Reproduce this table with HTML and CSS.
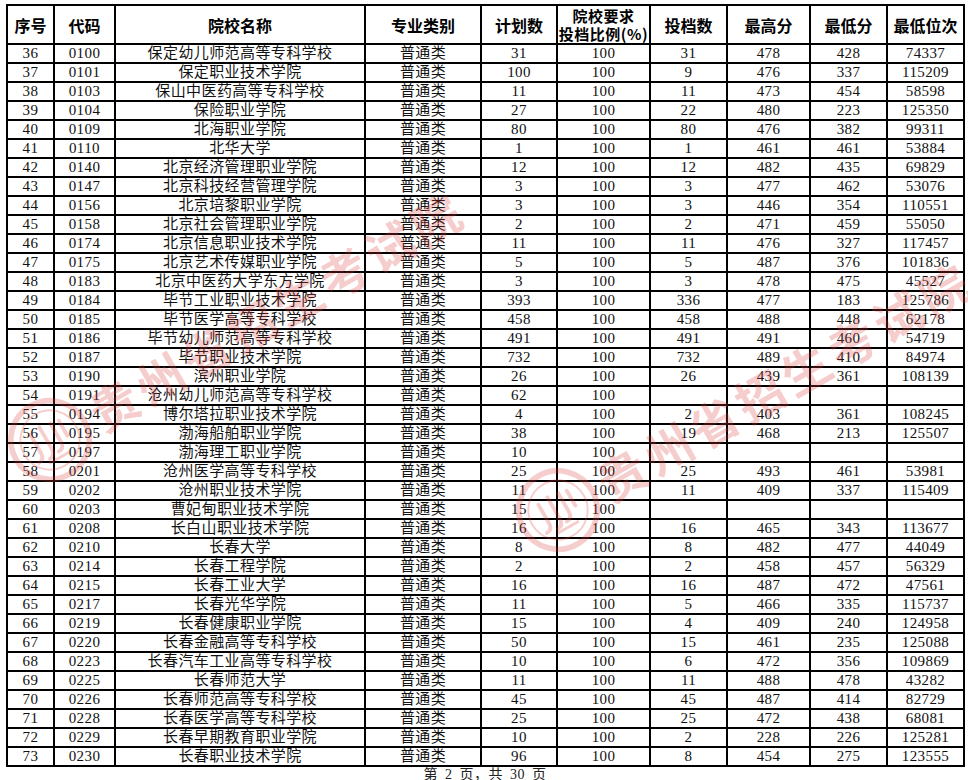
FILE: index.html
```html
<!DOCTYPE html>
<html lang="zh-CN">
<head>
<meta charset="utf-8">
<title>投档情况</title>
<link rel="stylesheet" href="styles.css">
</head>
<body>
<div class="page">
<table class="grid">
<colgroup>
<col class="c1"><col class="c2"><col class="c3"><col class="c4"><col class="c5"><col class="c6"><col class="c7"><col class="c8"><col class="c9"><col class="c10">
</colgroup>
<thead>
<tr><th>序号</th><th>代码</th><th>院校名称</th><th>专业类别</th><th>计划数</th><th class="two">院校要求<br>投档比例(%)</th><th>投档数</th><th>最高分</th><th>最低分</th><th>最低位次</th></tr>
</thead>
<tbody>
<tr><td>36</td><td>0100</td><td>保定幼儿师范高等专科学校</td><td>普通类</td><td>31</td><td>100</td><td>31</td><td>478</td><td>428</td><td>74337</td></tr>
<tr><td>37</td><td>0101</td><td>保定职业技术学院</td><td>普通类</td><td>100</td><td>100</td><td>9</td><td>476</td><td>337</td><td>115209</td></tr>
<tr><td>38</td><td>0103</td><td>保山中医药高等专科学校</td><td>普通类</td><td>11</td><td>100</td><td>11</td><td>473</td><td>454</td><td>58598</td></tr>
<tr><td>39</td><td>0104</td><td>保险职业学院</td><td>普通类</td><td>27</td><td>100</td><td>22</td><td>480</td><td>223</td><td>125350</td></tr>
<tr><td>40</td><td>0109</td><td>北海职业学院</td><td>普通类</td><td>80</td><td>100</td><td>80</td><td>476</td><td>382</td><td>99311</td></tr>
<tr><td>41</td><td>0110</td><td>北华大学</td><td>普通类</td><td>1</td><td>100</td><td>1</td><td>461</td><td>461</td><td>53884</td></tr>
<tr><td>42</td><td>0140</td><td>北京经济管理职业学院</td><td>普通类</td><td>12</td><td>100</td><td>12</td><td>482</td><td>435</td><td>69829</td></tr>
<tr><td>43</td><td>0147</td><td>北京科技经营管理学院</td><td>普通类</td><td>3</td><td>100</td><td>3</td><td>477</td><td>462</td><td>53076</td></tr>
<tr><td>44</td><td>0156</td><td>北京培黎职业学院</td><td>普通类</td><td>3</td><td>100</td><td>3</td><td>446</td><td>354</td><td>110551</td></tr>
<tr><td>45</td><td>0158</td><td>北京社会管理职业学院</td><td>普通类</td><td>2</td><td>100</td><td>2</td><td>471</td><td>459</td><td>55050</td></tr>
<tr><td>46</td><td>0174</td><td>北京信息职业技术学院</td><td>普通类</td><td>11</td><td>100</td><td>11</td><td>476</td><td>327</td><td>117457</td></tr>
<tr><td>47</td><td>0175</td><td>北京艺术传媒职业学院</td><td>普通类</td><td>5</td><td>100</td><td>5</td><td>487</td><td>376</td><td>101836</td></tr>
<tr><td>48</td><td>0183</td><td>北京中医药大学东方学院</td><td>普通类</td><td>3</td><td>100</td><td>3</td><td>478</td><td>475</td><td>45527</td></tr>
<tr><td>49</td><td>0184</td><td>毕节工业职业技术学院</td><td>普通类</td><td>393</td><td>100</td><td>336</td><td>477</td><td>183</td><td>125786</td></tr>
<tr><td>50</td><td>0185</td><td>毕节医学高等专科学校</td><td>普通类</td><td>458</td><td>100</td><td>458</td><td>488</td><td>448</td><td>62178</td></tr>
<tr><td>51</td><td>0186</td><td>毕节幼儿师范高等专科学校</td><td>普通类</td><td>491</td><td>100</td><td>491</td><td>491</td><td>460</td><td>54719</td></tr>
<tr><td>52</td><td>0187</td><td>毕节职业技术学院</td><td>普通类</td><td>732</td><td>100</td><td>732</td><td>489</td><td>410</td><td>84974</td></tr>
<tr><td>53</td><td>0190</td><td>滨州职业学院</td><td>普通类</td><td>26</td><td>100</td><td>26</td><td>439</td><td>361</td><td>108139</td></tr>
<tr><td>54</td><td>0191</td><td>沧州幼儿师范高等专科学校</td><td>普通类</td><td>62</td><td>100</td><td></td><td></td><td></td><td></td></tr>
<tr><td>55</td><td>0194</td><td>博尔塔拉职业技术学院</td><td>普通类</td><td>4</td><td>100</td><td>2</td><td>403</td><td>361</td><td>108245</td></tr>
<tr><td>56</td><td>0195</td><td>渤海船舶职业学院</td><td>普通类</td><td>38</td><td>100</td><td>19</td><td>468</td><td>213</td><td>125507</td></tr>
<tr><td>57</td><td>0197</td><td>渤海理工职业学院</td><td>普通类</td><td>10</td><td>100</td><td></td><td></td><td></td><td></td></tr>
<tr><td>58</td><td>0201</td><td>沧州医学高等专科学校</td><td>普通类</td><td>25</td><td>100</td><td>25</td><td>493</td><td>461</td><td>53981</td></tr>
<tr><td>59</td><td>0202</td><td>沧州职业技术学院</td><td>普通类</td><td>11</td><td>100</td><td>11</td><td>409</td><td>337</td><td>115409</td></tr>
<tr><td>60</td><td>0203</td><td>曹妃甸职业技术学院</td><td>普通类</td><td>15</td><td>100</td><td></td><td></td><td></td><td></td></tr>
<tr><td>61</td><td>0208</td><td>长白山职业技术学院</td><td>普通类</td><td>16</td><td>100</td><td>16</td><td>465</td><td>343</td><td>113677</td></tr>
<tr><td>62</td><td>0210</td><td>长春大学</td><td>普通类</td><td>8</td><td>100</td><td>8</td><td>482</td><td>477</td><td>44049</td></tr>
<tr><td>63</td><td>0214</td><td>长春工程学院</td><td>普通类</td><td>2</td><td>100</td><td>2</td><td>458</td><td>457</td><td>56329</td></tr>
<tr><td>64</td><td>0215</td><td>长春工业大学</td><td>普通类</td><td>16</td><td>100</td><td>16</td><td>487</td><td>472</td><td>47561</td></tr>
<tr><td>65</td><td>0217</td><td>长春光华学院</td><td>普通类</td><td>11</td><td>100</td><td>5</td><td>466</td><td>335</td><td>115737</td></tr>
<tr><td>66</td><td>0219</td><td>长春健康职业学院</td><td>普通类</td><td>15</td><td>100</td><td>4</td><td>409</td><td>240</td><td>124958</td></tr>
<tr><td>67</td><td>0220</td><td>长春金融高等专科学校</td><td>普通类</td><td>50</td><td>100</td><td>15</td><td>461</td><td>235</td><td>125088</td></tr>
<tr><td>68</td><td>0223</td><td>长春汽车工业高等专科学校</td><td>普通类</td><td>10</td><td>100</td><td>6</td><td>472</td><td>356</td><td>109869</td></tr>
<tr><td>69</td><td>0225</td><td>长春师范大学</td><td>普通类</td><td>11</td><td>100</td><td>11</td><td>488</td><td>478</td><td>43282</td></tr>
<tr><td>70</td><td>0226</td><td>长春师范高等专科学校</td><td>普通类</td><td>45</td><td>100</td><td>45</td><td>487</td><td>414</td><td>82729</td></tr>
<tr><td>71</td><td>0228</td><td>长春医学高等专科学校</td><td>普通类</td><td>25</td><td>100</td><td>25</td><td>472</td><td>438</td><td>68081</td></tr>
<tr><td>72</td><td>0229</td><td>长春早期教育职业学院</td><td>普通类</td><td>10</td><td>100</td><td>2</td><td>228</td><td>226</td><td>125281</td></tr>
<tr><td>73</td><td>0230</td><td>长春职业技术学院</td><td>普通类</td><td>96</td><td>100</td><td>8</td><td>454</td><td>275</td><td>123555</td></tr>
</tbody>
</table>
<div class="footer">第 2 页，共 30 页</div>

<div class="wm wm-a">
  <svg class="wm-logo" viewBox="0 0 90 90" width="86" height="86">
    <circle cx="45" cy="45" r="41" fill="none" stroke="currentColor" stroke-width="6"/>
    <circle cx="45" cy="45" r="31" fill="none" stroke="currentColor" stroke-width="2"/>
    <path d="M30 30 v22 q0 8 -7 8 M42 28 v26 q0 8 -7 8 M54 30 v22 q0 8 -7 8 M63 32 v18" fill="none" stroke="currentColor" stroke-width="4" stroke-linecap="round"/>
    <path d="M32 66 h26" stroke="currentColor" stroke-width="3"/>
  </svg>
  <span class="wm-text">贵州省招生考试院</span>
</div>
<div class="wm wm-b">
  <svg class="wm-logo" viewBox="0 0 90 90" width="86" height="86">
    <circle cx="45" cy="45" r="41" fill="none" stroke="currentColor" stroke-width="6"/>
    <circle cx="45" cy="45" r="31" fill="none" stroke="currentColor" stroke-width="2"/>
    <path d="M30 30 v22 q0 8 -7 8 M42 28 v26 q0 8 -7 8 M54 30 v22 q0 8 -7 8 M63 32 v18" fill="none" stroke="currentColor" stroke-width="4" stroke-linecap="round"/>
    <path d="M32 66 h26" stroke="currentColor" stroke-width="3"/>
  </svg>
  <span class="wm-text">贵州省招生考试院</span>
</div>
</div>
</body>
</html>
```
FILE: styles.css
```css
html, body {
  margin: 0;
  padding: 0;
  background: #fff;
}
body {
  font-family: "Liberation Serif", "Noto Sans CJK SC", serif;
  color: #111;
}
.page {
  position: relative;
  width: 968px;
  height: 780px;
  overflow: hidden;
  padding: 4px 0 0 6px;
  box-sizing: border-box;
}
.grid {
  border-collapse: collapse;
  table-layout: fixed;
  width: 958px;
}
.c1 { width: 47px; }
.c2 { width: 61px; }
.c3 { width: 250px; }
.c4 { width: 116px; }
.c5 { width: 76px; }
.c6 { width: 93px; }
.c7 { width: 77px; }
.c8 { width: 83px; }
.c9 { width: 77px; }
.c10 { width: 77px; }
.grid th, .grid td {
  border: 2px solid #000;
  padding: 0;
  text-align: center;
  white-space: nowrap;
  overflow: hidden;
}
.grid th {
  font-family: "Noto Sans CJK SC", sans-serif;
  font-weight: 700;
  font-size: 16px;
  line-height: 18px;
  height: 37px;
  color: #000;
}
.grid th.two {
  font-size: 15px;
  line-height: 18px;
  letter-spacing: 0.5px;
}
.grid td {
  font-size: 15px;
  line-height: 17px;
  height: 17px;
  letter-spacing: 0.4px;
}
.footer {
  font-size: 14px;
  line-height: 13px;
  text-align: center;
  padding-top: 1px;
  width: 958px;
  color: #222;
  word-spacing: 3px;
  letter-spacing: 0.5px;
}
.wm {
  position: absolute;
  display: flex;
  align-items: center;
  gap: 6px;
  color: rgba(222, 60, 60, 0.26);
  transform-origin: 43px 43px;
  transform: rotate(-30deg);
  pointer-events: none;
  white-space: nowrap;
}
.wm-a { left: 7px; top: 397px; }
.wm-b { left: 515px; top: 467px; }
.wm-logo { flex: none; }
.wm-text {
  font-family: "Noto Sans CJK SC", sans-serif;
  font-weight: 700;
  font-size: 48px;
  letter-spacing: 5px;
}
```
